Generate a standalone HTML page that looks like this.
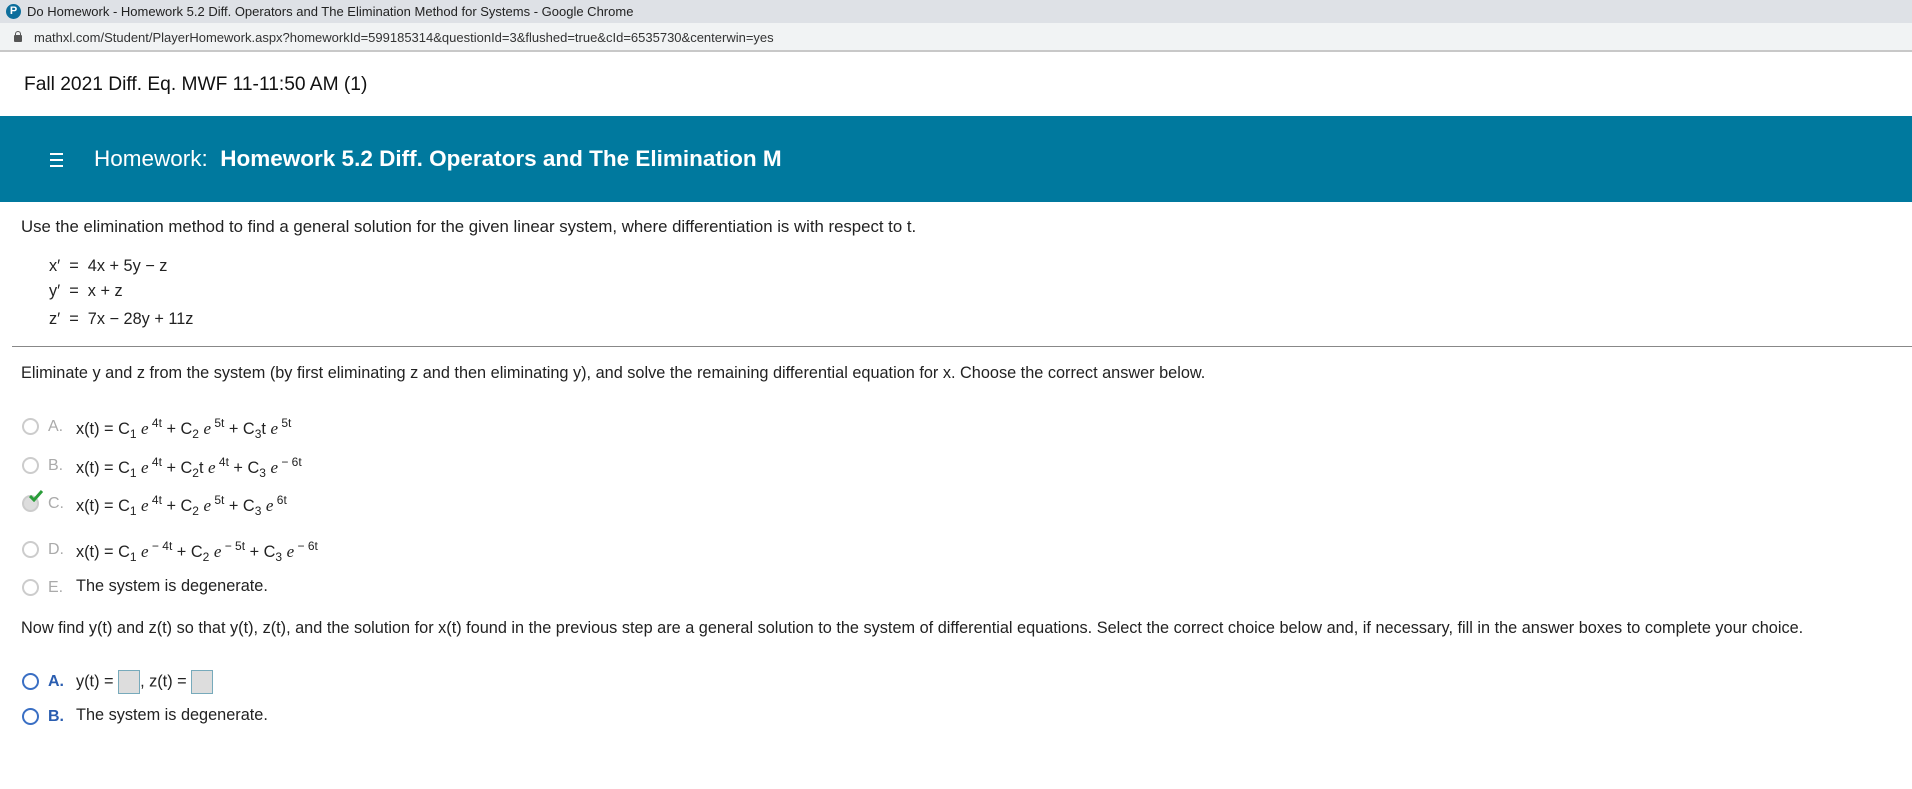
<!DOCTYPE html>
<html><head><style>
body{margin:0;width:1912px;height:789px;position:relative;background:#fff;font-family:"Liberation Sans",Arial,sans-serif;color:#222;overflow:hidden}
.a{position:absolute;white-space:nowrap;line-height:1}
.t{font-size:16.3px;}
.e{font-family:"Liberation Serif",serif;font-style:italic;font-size:17px}
sup{font-size:12px;vertical-align:7px}
sub{font-size:12px;vertical-align:-4px}
.r{position:absolute;width:13px;height:13px;border:2px solid #ccc;border-radius:50%;background:#fff}
.rb{border-color:#3a6fc4}
.l{position:absolute;font-size:16px;color:#aaa}
.lb{color:#2a5db0;font-weight:bold}
.box{display:inline-block;width:20px;height:22px;background:#ddd;border:1px solid #7ab;vertical-align:middle}
</style></head><body>
<div style="position:absolute;left:0;top:0;width:1912px;height:23px;background:#dee1e6"></div>
<div style="position:absolute;left:6px;top:4px;width:15px;height:15px;border-radius:50%;background:#0d6e9c;color:#fff;font-size:11px;text-align:center;line-height:15px;font-weight:bold">P</div>
<div class="a" style="left:27px;top:5px;font-size:13px;color:#222">Do Homework - Homework 5.2 Diff. Operators and The Elimination Method for Systems - Google Chrome</div>
<div style="position:absolute;left:0;top:23px;width:1912px;height:27px;background:#f1f3f4;border-bottom:2px solid #c8c8c8"></div>
<div style="position:absolute;left:14px;top:35px;width:8px;height:7px;background:#555;border-radius:1px"></div>
<div style="position:absolute;left:15px;top:31px;width:4px;height:4px;border:1px solid #555;border-bottom:none;border-radius:3px 3px 0 0"></div>
<div class="a" style="left:34px;top:31px;font-size:13px;color:#333">mathxl.com/Student/PlayerHomework.aspx?homeworkId=599185314&amp;questionId=3&amp;flushed=true&amp;cId=6535730&amp;centerwin=yes</div>
<div class="a" style="left:24px;top:75px;font-size:19.2px;color:#111">Fall 2021 Diff. Eq. MWF 11-11:50 AM (1)</div>
<div style="position:absolute;left:0;top:116px;width:1912px;height:86px;background:#00799e"></div>
<div style="position:absolute;left:50px;top:153px;width:13px;height:2px;background:#fff;box-shadow:0 6px 0 #fff,0 12px 0 #fff"></div>
<div class="a" style="left:94px;top:148px;font-size:22.5px;color:#fff">Homework:&nbsp; <b>Homework 5.2 Diff. Operators and The Elimination M</b></div>
<div class="a" style="left:21px;top:219px;font-size:16.8px">Use the elimination method to find a general solution for the given linear system, where differentiation is with respect to t.</div>
<div class="a t" style="left:49px;top:258px">x′ &nbsp;= &nbsp;4x + 5y − z</div>
<div class="a t" style="left:49px;top:283px">y′ &nbsp;= &nbsp;x + z</div>
<div class="a t" style="left:49px;top:311px">z′ &nbsp;= &nbsp;7x − 28y + 11z</div>
<div style="position:absolute;left:12px;top:346px;width:1900px;height:1px;background:#888"></div>
<div class="a t" style="left:21px;top:365px">Eliminate y and z from the system (by first eliminating z and then eliminating y), and solve the remaining differential equation for x. Choose the correct answer below.</div>

<div class="r" style="left:22px;top:418px"></div><div class="a l" style="left:48px;top:419px">A.</div>
<div class="a t" style="left:76px;top:417px">x(t) = C<sub>1</sub> <span class="e">e</span><sup> 4t</sup> + C<sub>2</sub> <span class="e">e</span><sup> 5t</sup> + C<sub>3</sub>t <span class="e">e</span><sup> 5t</sup></div>
<div class="r" style="left:22px;top:457px"></div><div class="a l" style="left:48px;top:458px">B.</div>
<div class="a t" style="left:76px;top:456px">x(t) = C<sub>1</sub> <span class="e">e</span><sup> 4t</sup> + C<sub>2</sub>t <span class="e">e</span><sup> 4t</sup> + C<sub>3</sub> <span class="e">e</span><sup> − 6t</sup></div>
<div class="r" style="left:22px;top:495px;background:#ddd"></div>
<svg style="position:absolute;left:29px;top:490px" width="14" height="12"><path d="M1 6 L5 10 L13 1" stroke="#2a9d3a" stroke-width="3" fill="none"/></svg>
<div class="a l" style="left:48px;top:496px">C.</div>
<div class="a t" style="left:76px;top:494px">x(t) = C<sub>1</sub> <span class="e">e</span><sup> 4t</sup> + C<sub>2</sub> <span class="e">e</span><sup> 5t</sup> + C<sub>3</sub> <span class="e">e</span><sup> 6t</sup></div>
<div class="r" style="left:22px;top:541px"></div><div class="a l" style="left:48px;top:542px">D.</div>
<div class="a t" style="left:76px;top:540px">x(t) = C<sub>1</sub> <span class="e">e</span><sup> − 4t</sup> + C<sub>2</sub> <span class="e">e</span><sup> − 5t</sup> + C<sub>3</sub> <span class="e">e</span><sup> − 6t</sup></div>
<div class="r" style="left:22px;top:579px"></div><div class="a l" style="left:48px;top:580px">E.</div>
<div class="a t" style="left:76px;top:578px">The system is degenerate.</div>

<div class="a t" style="left:21px;top:620px">Now find y(t) and z(t) so that y(t), z(t), and the solution for x(t) found in the previous step are a general solution to the system of differential equations. Select the correct choice below and, if necessary, fill in the answer boxes to complete your choice.</div>
<div class="r rb" style="left:22px;top:673px"></div><div class="a l lb" style="left:48px;top:674px">A.</div>
<div class="a t" style="left:76px;top:670px">y(t) = <span class="box"></span>, z(t) = <span class="box"></span></div>
<div class="r rb" style="left:22px;top:708px"></div><div class="a l lb" style="left:48px;top:709px">B.</div>
<div class="a t" style="left:76px;top:707px">The system is degenerate.</div>
</body></html>
